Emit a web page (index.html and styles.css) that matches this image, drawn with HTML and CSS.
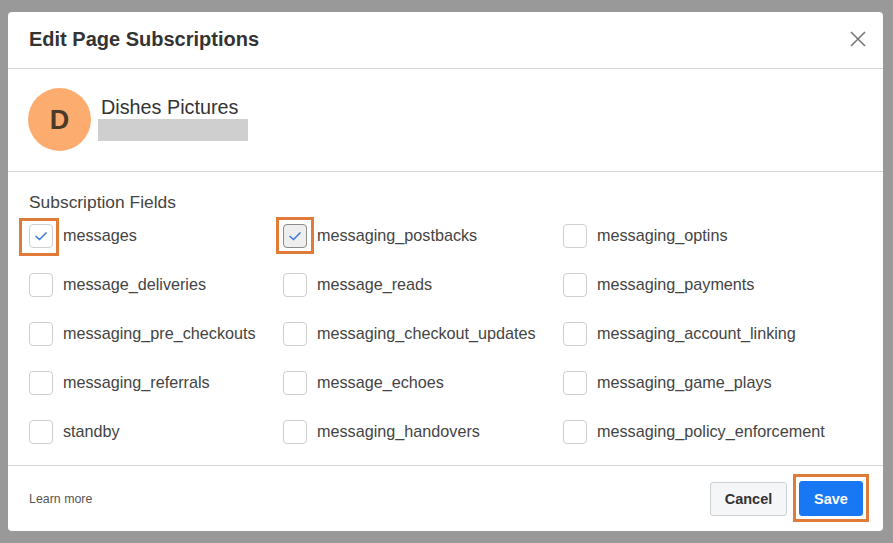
FILE: index.html
```html
<!DOCTYPE html>
<html>
<head>
<meta charset="utf-8">
<link rel="stylesheet" href="styles.css">
</head>
<body>
<div class="backdrop">
  <div class="modal">
    <div class="header">
      <h1 class="title">Edit Page Subscriptions</h1>
      <svg class="close" width="16" height="16" viewBox="0 0 16 16"><path d="M1 1L15 15M15 1L1 15" stroke="#777" stroke-width="1.6" fill="none"/></svg>
    </div>
    <div class="page">
      <div class="avatar">D</div>
      <div class="page-info">
        <div class="page-name">Dishes Pictures</div>
        <div class="page-id"></div>
      </div>
    </div>
    <div class="fields">
      <div class="fields-title">Subscription Fields</div>
      <div class="grid">
        <label class="item"><span class="hl hl1"><span class="box checked"><svg width="14" height="10" viewBox="0 0 14 10"><path d="M1.5 5L5.5 8.5L12.5 1.5" stroke="#3b78d8" stroke-width="1.5" fill="none"/></svg></span></span><span class="lbl">messages</span></label>
        <label class="item"><span class="hl hl2"><span class="box checked focus"><svg width="14" height="10" viewBox="0 0 14 10"><path d="M1.5 5L5.5 8.5L12.5 1.5" stroke="#3b78d8" stroke-width="1.5" fill="none"/></svg></span></span><span class="lbl">messaging_postbacks</span></label>
        <label class="item"><span class="box"></span><span class="lbl">messaging_optins</span></label>
        <label class="item"><span class="box"></span><span class="lbl">message_deliveries</span></label>
        <label class="item"><span class="box"></span><span class="lbl">message_reads</span></label>
        <label class="item"><span class="box"></span><span class="lbl">messaging_payments</span></label>
        <label class="item"><span class="box"></span><span class="lbl">messaging_pre_checkouts</span></label>
        <label class="item"><span class="box"></span><span class="lbl">messaging_checkout_updates</span></label>
        <label class="item"><span class="box"></span><span class="lbl">messaging_account_linking</span></label>
        <label class="item"><span class="box"></span><span class="lbl">messaging_referrals</span></label>
        <label class="item"><span class="box"></span><span class="lbl">message_echoes</span></label>
        <label class="item"><span class="box"></span><span class="lbl">messaging_game_plays</span></label>
        <label class="item"><span class="box"></span><span class="lbl">standby</span></label>
        <label class="item"><span class="box"></span><span class="lbl">messaging_handovers</span></label>
        <label class="item"><span class="box"></span><span class="lbl">messaging_policy_enforcement</span></label>
      </div>
    </div>
    <div class="footer">
      <a class="learn">Learn more</a>
      <div class="actions">
        <button class="btn cancel">Cancel</button>
        <span class="hl-save"><button class="btn save">Save</button></span>
      </div>
    </div>
  </div>
</div>
</body>
</html>
```
FILE: styles.css
```css
*, *::before, *::after { box-sizing: border-box; }
html, body { margin: 0; padding: 0; }
body {
  width: 893px; height: 543px; overflow: hidden;
  background: #999;
  font-family: "Liberation Sans", Arial, sans-serif;
  color: #444;
}
.backdrop { padding: 12px 0 0 8px; }
.modal {
  width: 875px; height: 519px;
  background: #fff;
  border-radius: 4px;
  display: flex; flex-direction: column;
}
.header {
  height: 57px;
  border-bottom: 1px solid #d4d4d4;
  display: flex; align-items: center; justify-content: space-between;
  padding: 0 17px 0 21px;
}
.title {
  margin: 0; font-size: 20px; font-weight: bold; color: #333;
  padding-bottom: 1px;
}
.close { margin-top: -2px; }
.page {
  height: 103px;
  border-bottom: 1px solid #d4d4d4;
  display: flex; align-items: flex-start;
  padding: 19px 0 0 20px;
}
.avatar {
  width: 63px; height: 63px; border-radius: 50%;
  background: #fdac6f;
  color: #4a3a2a;
  font-size: 27px; font-weight: bold;
  display: flex; align-items: center; justify-content: center;
  padding-top: 1px;
}
.page-info { margin-left: 7px; padding-top: 9px; }
.page-name { font-size: 19.8px; color: #333; margin-left: 3px; line-height: 21px; }
.page-id { width: 150px; height: 22px; background: #cfcfcf; margin-top: 1px; }
.fields {
  height: 294px;
  border-bottom: 1px solid #d4d4d4;
  padding: 20px 0 0 21px;
}
.fields-title { font-size: 17.4px; color: #444; line-height: 20px; }
.grid {
  display: grid;
  grid-template-columns: 254px 280px 280px;
  grid-auto-rows: 49px;
  margin-top: -1px;
}
.item { display: flex; align-items: center; height: 49px; position: relative; }
.box {
  width: 24px; height: 24px; flex: none;
  border: 1px solid #cfcfcf; border-radius: 4px;
  background: #fff;
  display: flex; align-items: center; justify-content: center;
}
.box.focus { border-color: #8a8a8a; background: #eee; }
.lbl { margin-left: 10px; font-size: 16.2px; color: #444; }
.hl { position: relative; display: flex; }
.hl::after {
  content: ""; position: absolute;
  border: 3px solid #e07b39;
}
.hl1::after { left: -10px; top: -6px; width: 40px; height: 38px; }
.hl2::after { left: -7px; top: -7px; width: 38px; height: 37px; }
.footer {
  flex: 1;
  display: flex; align-items: center; justify-content: space-between;
  padding: 0 14px 0 21px;
}
.learn { font-size: 12.4px; color: #555; padding-top: 1px; }
.actions { display: flex; align-items: center; gap: 6px; }
.btn {
  font-family: "Liberation Sans", Arial, sans-serif;
  font-weight: bold; font-size: 14.5px;
  border-radius: 3px; height: 34px;
  cursor: pointer;
}
.cancel {
  width: 77px; background: #f5f6f7; border: 1px solid #ccd0d5; color: #333;
  margin-top: 1px;
}
.hl-save { border: 3px solid #e07b39; padding: 4px 3px 3px; display: flex; margin-top: -1px; }
.save {
  width: 64px; height: 35px; background: #1877f2; border: 1px solid #1877f2; color: #fff;
}
```
